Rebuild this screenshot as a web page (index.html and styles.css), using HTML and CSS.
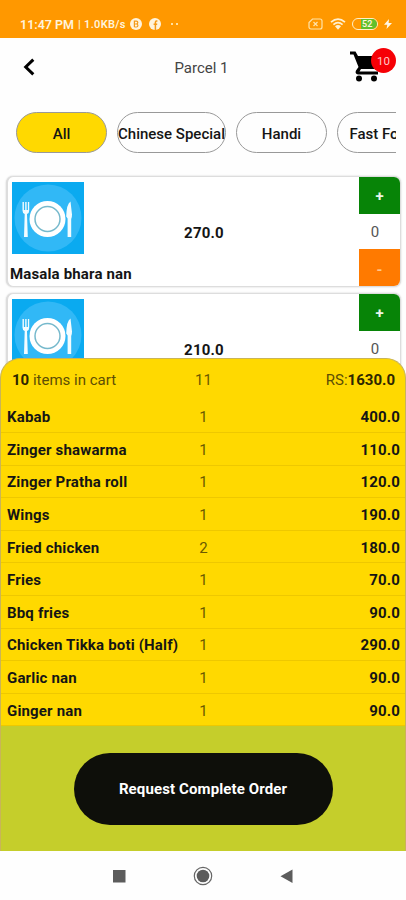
FILE: index.html
```html
<!DOCTYPE html>
<html lang="en">
<head>
    <meta charset="UTF-8">
    <meta name="viewport" content="width=device-width, initial-scale=1.0">
    <title>Parcel 1</title>
    <link rel="stylesheet" href="styles.css">
</head>
<body>
    <div class="status-bar">
        <span class="status-time">11:47 PM</span>
        <span class="status-speed">| 1.0KB/s</span>
        <svg class="status-app" width="12" height="12" viewBox="0 0 12 12">
            <circle cx="6" cy="6" r="6" fill="#fff3dc"/>
            <path d="M4.4 9V3.2H6.4a1.4 1.4 0 0 1 0 2.8H4.4M6.4 6a1.5 1.5 0 0 1 0 3H4.4" fill="none" stroke="#f59a18" stroke-width="1.2"/>
        </svg>
        <svg class="status-app" width="12" height="12" viewBox="0 0 12 12">
            <circle cx="6" cy="6" r="6" fill="#fff3dc"/>
            <path d="M8.4 3H7.5Q6.4 3 6.4 4.2V12M4.6 6.3H8.2" fill="none" stroke="#f59a18" stroke-width="1.5"/>
        </svg>
        <span class="status-dots"><i></i><i></i></span>
        <div class="status-right">
            <svg width="15" height="12" viewBox="0 0 15 12" fill="none" stroke="#ffe3a8">
                <path d="M4.5 1H12a2 2 0 0 1 2 2v6a2 2 0 0 1-2 2H3a2 2 0 0 1-2-2V4.5z" stroke-width="1.2"/>
                <path d="M5.5 4l4 4M9.5 4l-4 4" stroke-width="1.2"/>
            </svg>
            <svg width="16" height="12" viewBox="0 0 16 12" fill="none" stroke="#fff0d0" stroke-width="1.7">
                <path d="M1 4.2Q8-2 15 4.2M3.4 6.6Q8 2.7 12.6 6.6"/>
                <path d="M5 8.3Q8 5.8 11 8.3L8 11.7z" fill="#fff0d0" stroke="none"/>
            </svg>
            <span class="battery"><span class="battery-level">52</span></span>
            <svg width="8" height="10" viewBox="0 0 8 10"><path d="M5 0L0 5.8H3.3L2.5 10L8 4H4.6z" fill="#fff8e8"/></svg>
        </div>
    </div>

    <header class="header">
        <svg class="back" width="12" height="18" viewBox="0 0 12 18"><path d="M10.3 1.6L2.7 9L10.3 16.4" fill="none" stroke="#000" stroke-width="3"/></svg>
        <h1>Parcel 1</h1>
        <div class="cart">
            <svg width="34" height="34" viewBox="0 0 34 34">
                <path d="M0 1.5H5.5L8 6H31L24.5 19H11L9.5 21.5H28V24.5H8Q4.5 23.5 6 20.5L8.5 17L3.5 4.5H0z" fill="#000"/>
                <circle cx="9" cy="28.5" r="3" fill="#000"/>
                <circle cx="24" cy="28.5" r="3" fill="#000"/>
            </svg>
            <span class="cart-badge">10</span>
        </div>
    </header>

    <nav class="categories">
        <div class="chip active">All</div>
        <div class="chip wide">Chinese Special</div>
        <div class="chip">Handi</div>
        <div class="chip">Fast Food</div>
    </nav>

    <main class="menu">
        <div class="card">
            <div class="card-info">
                <svg class="dish" width="72" height="72" viewBox="0 0 72 72">
                    <rect width="72" height="72" fill="#0aaaf0"/>
                    <circle cx="36" cy="36" r="33.5" fill="#31b8f6"/>
                    <circle cx="35.5" cy="37" r="18" fill="#fff"/>
                    <circle cx="35.5" cy="37" r="12.5" fill="#fff" stroke="#76b9cc" stroke-width="1.5"/>
                    <path d="M10.5 20v8.5q0 3 2.2 3.5L12 55h3.8L15 32q2.2-.5 2.2-3.5V20h-1.3v8h-1.3v-8h-1.4v8h-1.3v-8z" fill="#f4fcff"/>
                    <path d="M58.5 19.5q-4 2.5-4.3 15l1.4 2V55h3.6V37q.8-1 .8-4.5z" fill="#f4fcff"/>
                </svg>
                <div class="card-name">Masala bhara nan</div>
            </div>
            <div class="card-price">270.0</div>
            <div class="stepper">
                <div class="plus">+</div>
                <div class="count">0</div>
                <div class="minus">-</div>
            </div>
        </div>
        <div class="card">
            <div class="card-info">
                <svg class="dish" width="72" height="72" viewBox="0 0 72 72">
                    <rect width="72" height="72" fill="#0aaaf0"/>
                    <circle cx="36" cy="36" r="33.5" fill="#31b8f6"/>
                    <circle cx="35.5" cy="37" r="18" fill="#fff"/>
                    <circle cx="35.5" cy="37" r="12.5" fill="#fff" stroke="#76b9cc" stroke-width="1.5"/>
                    <path d="M10.5 20v8.5q0 3 2.2 3.5L12 55h3.8L15 32q2.2-.5 2.2-3.5V20h-1.3v8h-1.3v-8h-1.4v8h-1.3v-8z" fill="#f4fcff"/>
                    <path d="M58.5 19.5q-4 2.5-4.3 15l1.4 2V55h3.6V37q.8-1 .8-4.5z" fill="#f4fcff"/>
                </svg>
            </div>
            <div class="card-price">210.0</div>
            <div class="stepper">
                <div class="plus">+</div>
                <div class="count">0</div>
            </div>
        </div>
    </main>

    <section class="sheet">
        <div class="summary">
            <span><b>10</b> items in cart</span>
            <span class="qty">11</span>
            <span class="total">RS:<b>1630.0</b></span>
        </div>
        <div class="item"><b>Kabab</b><span class="qty">1</span><b class="total">400.0</b></div>
        <div class="item"><b>Zinger shawarma</b><span class="qty">1</span><b class="total">110.0</b></div>
        <div class="item"><b>Zinger Pratha roll</b><span class="qty">1</span><b class="total">120.0</b></div>
        <div class="item"><b>Wings</b><span class="qty">1</span><b class="total">190.0</b></div>
        <div class="item"><b>Fried chicken</b><span class="qty">2</span><b class="total">180.0</b></div>
        <div class="item"><b>Fries</b><span class="qty">1</span><b class="total">70.0</b></div>
        <div class="item"><b>Bbq fries</b><span class="qty">1</span><b class="total">90.0</b></div>
        <div class="item"><b>Chicken Tikka boti (Half)</b><span class="qty">1</span><b class="total">290.0</b></div>
        <div class="item"><b>Garlic nan</b><span class="qty">1</span><b class="total">90.0</b></div>
        <div class="item"><b>Ginger nan</b><span class="qty">1</span><b class="total">90.0</b></div>
        <div class="sheet-footer">
            <button class="order-button">Request Complete Order</button>
        </div>
    </section>

    <footer class="nav-bar">
        <svg width="20" height="20" viewBox="0 0 20 20"><rect x="4" y="4" width="12.5" height="12.5" fill="#5c5c5c"/></svg>
        <svg width="20" height="20" viewBox="0 0 20 20"><circle cx="10" cy="10" r="8.7" fill="none" stroke="#666" stroke-width="1.2"/><circle cx="10" cy="10" r="6.3" fill="#5c5c5c"/></svg>
        <svg width="20" height="20" viewBox="0 0 20 20"><path d="M15.5 3.5V17L3.5 10.25z" fill="#5c5c5c"/></svg>
    </footer>
</body>
</html>
```

FILE: styles.css
```css
* {
    box-sizing: border-box;
}
body {
    font-family: Roboto, sans-serif;
    font-size: 15px;
    color: #151515;
    background-color: #fefefe;
    margin: 0;
    height: 900px;
    display: flex;
    flex-direction: column;
    position: relative;
    overflow: hidden;
}
.status-bar {
    height: 38px;
    flex: none;
    background-color: #ff9800;
    color: #fff3dc;
    display: flex;
    align-items: center;
    padding: 10px 14px 0 20px;
    font-size: 12px;
    font-weight: 600;
}
.status-time {
    width: 55px;
    font-size: 12.5px;
    white-space: nowrap;
}
.status-speed {
    width: 55px;
    margin-left: 3px;
    font-size: 11px;
    letter-spacing: 0.3px;
    white-space: nowrap;
}
.status-app {
    margin-right: 7px;
    margin-left: -3px;
}
.status-app + .status-app {
    margin-left: 0;
}
.status-dots {
    display: flex;
    gap: 3px;
    margin-left: 3px;
}
.status-dots i {
    width: 2px;
    height: 2px;
    background-color: #ffe0a0;
}
.status-right {
    display: flex;
    align-items: center;
    gap: 6px;
    margin-left: auto;
}
.status-right > svg:first-child {
    margin-right: 1px;
}
.battery {
    width: 26px;
    height: 12px;
    border: 1.5px solid #fff0c8;
    border-radius: 6px;
    display: flex;
    justify-content: flex-end;
}
.battery-level {
    width: 16px;
    border-radius: 0 5px 5px 0;
    background-color: #5fc02c;
    font-size: 9px;
    line-height: 10px;
    padding-left: 1px;
}
.header {
    height: 58px;
    flex: none;
    display: flex;
    align-items: center;
    justify-content: space-between;
    padding: 0 20px 0 23px;
}
.header h1 {
    margin: 2px 0 0 18px;
    font-size: 15px;
    font-weight: 400;
    color: #444;
}
.cart {
    position: relative;
    width: 36px;
    height: 34px;
}
.cart-badge {
    position: absolute;
    top: -2px;
    right: -10px;
    width: 25px;
    height: 25px;
    border-radius: 50%;
    background-color: #f60006;
    color: #ffc9c9;
    font-size: 11.5px;
    line-height: 26px;
    text-align: center;
}
.categories {
    display: flex;
    flex: none;
    gap: 10px;
    margin: 16px 10px 0 16px;
    overflow: hidden;
}
.chip {
    flex: none;
    width: 91px;
    height: 41px;
    border: 1px solid #999;
    border-radius: 21px;
    line-height: 42px;
    text-align: center;
    font-weight: 500;
    white-space: nowrap;
}
.chip.wide {
    width: 109px;
}
.chip.active {
    background-color: #ffd900;
}
.menu {
    display: flex;
    flex-direction: column;
    gap: 6px;
    margin: 23px 5px 0 6px;
}
.card {
    height: 111px;
    flex: none;
    display: grid;
    grid-template-columns: 1fr 60px 1fr;
    border: 1px solid #ddd;
    border-width: 1px 1px 1px 2px;
    border-radius: 7px;
    box-shadow: 0 0 2px #ccc;
    background-color: #fff;
    overflow: hidden;
}
.card-info {
    padding: 5px 0 0 2px;
}
.dish {
    display: block;
    margin-left: 2px;
}
.card-name {
    margin-top: 11px;
    font-weight: 700;
    line-height: 18px;
    letter-spacing: 0.15px;
    white-space: nowrap;
}
.card-price {
    align-self: center;
    padding-top: 2px;
    text-align: center;
    font-weight: 700;
    letter-spacing: 0.2px;
}
.stepper {
    justify-self: end;
    width: 41px;
    display: grid;
    grid-template-rows: 37px 35px 37px;
    text-align: center;
}
.plus, .minus {
    color: #e9f6e9;
    font-weight: 700;
    line-height: 38px;
}
.plus {
    background-color: #078407;
}
.minus {
    background-color: #ff7a00;
    line-height: 42px;
    color: #ffc68a;
}
.count {
    padding-right: 9px;
    line-height: 37px;
    color: #555;
}
.sheet {
    position: absolute;
    top: 358px;
    left: 0;
    right: 0;
    height: 493px;
    display: flex;
    flex-direction: column;
    border: 1px solid #c9b458;
    border-bottom: none;
    border-radius: 20px 20px 0 0;
    background-color: #ffd900;
    overflow: hidden;
}
.summary, .item {
    display: grid;
    grid-template-columns: 1fr 20px 1fr;
    align-items: center;
    white-space: nowrap;
}
.summary {
    height: 41.5px;
    padding: 0 10px 0 11px;
    color: #5d4e05;
}
.summary b {
    color: #2d2600;
}
.item {
    height: 32.6px;
    padding: 2px 5px 0 6px;
    border-bottom: 1px solid #eec800;
    letter-spacing: 0.17px;
}
.qty {
    text-align: center;
    color: #6b5900;
}
.total {
    text-align: right;
}
.sheet-footer {
    flex: 1;
    display: flex;
    align-items: center;
    justify-content: center;
    padding-top: 1px;
    background-color: #c5ce2b;
}
.order-button {
    width: 259px;
    height: 72px;
    border: none;
    border-radius: 37px;
    background-color: #0e0f0a;
    color: #fff;
    font-family: inherit;
    font-size: 15px;
    font-weight: 700;
    letter-spacing: 0.12px;
}
.nav-bar {
    position: absolute;
    bottom: 0;
    left: 0;
    right: 0;
    height: 49px;
    display: flex;
    justify-content: center;
    align-items: center;
    gap: 64px;
    background-color: #fefefe;
}
```
